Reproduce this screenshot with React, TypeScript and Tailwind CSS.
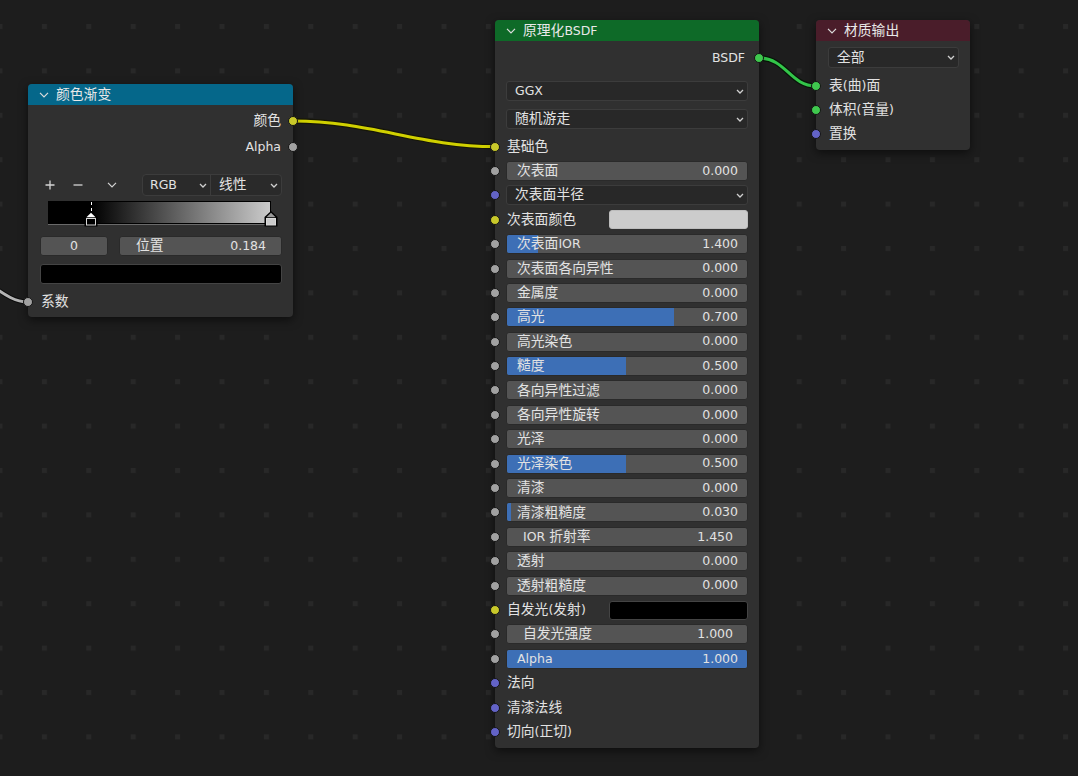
import React from 'react';

const CJK = /([\u2E80-\u9FFF\uFF00-\uFFEF]+)/;
function T({ s }: { s: string }) {
  const parts = s.split(CJK);
  return (
    <>
      {parts.map((p, i) =>
        i % 2 === 1 ? (
          <span key={i} className="text-[13.8px]">
            {p}
          </span>
        ) : p ? (
          <React.Fragment key={i}>{p}</React.Fragment>
        ) : null
      )}
    </>
  );
}

function HeadChev() {
  return (
    <svg width="10" height="6" viewBox="0 0 10 6" className="shrink-0">
      <polyline points="1,0.8 5,4.8 9,0.8" fill="none" stroke="#dcdcdc" strokeWidth="1.2" />
    </svg>
  );
}

function SmallChev() {
  return (
    <svg width="8" height="5" viewBox="0 0 8 5" className="shrink-0">
      <polyline points="1,1 4,4 7,1" fill="none" stroke="#d0d0d0" strokeWidth="1.3" />
    </svg>
  );
}

function Socket({ c, side }: { c: string; side: 'l' | 'r' }) {
  return (
    <span
      className={`absolute top-1/2 -translate-y-1/2 w-[10px] h-[10px] rounded-full border border-[#141414] ${c} ${
        side === 'l' ? 'left-[-5px]' : 'right-[-5px]'
      }`}
    />
  );
}

function Node({
  className,
  header,
  title,
  children,
}: {
  className: string;
  header: string;
  title: string;
  children: React.ReactNode;
}) {
  return (
    <div className={`absolute rounded-[4px] bg-[#303030] shadow-[0_3px_10px_rgba(0,0,0,0.55)] ${className}`}>
      <div className={`h-[21px] rounded-t-[4px] flex items-center pl-[11px] gap-[7px] text-[#e8e8e8] ${header}`}>
        <HeadChev />
        <span className="leading-none">
          <T s={title} />
        </span>
      </div>
      {children}
    </div>
  );
}

const Y = 'bg-[#c8c82a]';
const G = 'bg-[#a1a1a1]';
const P = 'bg-[#6363c7]';
const S = 'bg-[#3fc84e]';

type Row =
  | { k: 'label'; t: string; s: string }
  | { k: 'num'; t: string; v: string; f?: number; s: string }
  | { k: 'arrow'; t: string; v: string; s: string }
  | { k: 'drop'; t: string; s: string }
  | { k: 'color'; t: string; c: string; s: string };

const rows: Row[] = [
  { k: 'label', t: '基础色', s: Y },
  { k: 'num', t: '次表面', v: '0.000', s: G },
  { k: 'drop', t: '次表面半径', s: P },
  { k: 'color', t: '次表面颜色', c: 'bg-[#cccccc] border-[#bdbdbd]', s: Y },
  { k: 'num', t: '次表面IOR', v: '1.400', f: 31, s: G },
  { k: 'num', t: '次表面各向异性', v: '0.000', s: G },
  { k: 'num', t: '金属度', v: '0.000', s: G },
  { k: 'num', t: '高光', v: '0.700', f: 167, s: G },
  { k: 'num', t: '高光染色', v: '0.000', s: G },
  { k: 'num', t: '糙度', v: '0.500', f: 119, s: G },
  { k: 'num', t: '各向异性过滤', v: '0.000', s: G },
  { k: 'num', t: '各向异性旋转', v: '0.000', s: G },
  { k: 'num', t: '光泽', v: '0.000', s: G },
  { k: 'num', t: '光泽染色', v: '0.500', f: 119, s: G },
  { k: 'num', t: '清漆', v: '0.000', s: G },
  { k: 'num', t: '清漆粗糙度', v: '0.030', f: 4, s: G },
  { k: 'arrow', t: 'IOR 折射率', v: '1.450', s: G },
  { k: 'num', t: '透射', v: '0.000', s: G },
  { k: 'num', t: '透射粗糙度', v: '0.000', s: G },
  { k: 'color', t: '自发光(发射)', c: 'bg-black border-[#444444]', s: Y },
  { k: 'arrow', t: '自发光强度', v: '1.000', s: G },
  { k: 'num', t: 'Alpha', v: '1.000', f: 242, s: G },
  { k: 'label', t: '法向', s: P },
  { k: 'label', t: '清漆法线', s: P },
  { k: 'label', t: '切向(正切)', s: P },
];

function BsdfRow({ r }: { r: Row }) {
  let inner: React.ReactNode = null;
  if (r.k === 'label') {
    inner = (
      <span className="pl-[12px]">
        <T s={r.t} />
      </span>
    );
  } else if (r.k === 'num' || r.k === 'arrow') {
    inner = (
      <div
        className={`relative mx-[11px] flex-1 h-[20px] rounded-[3px] bg-[#545454] border border-[#2a2a2a] overflow-hidden flex items-center justify-between ${
          r.k === 'num' ? 'pl-[10px] pr-[9px]' : 'pl-[16px] pr-[14px]'
        }`}
      >
        {r.k === 'num' && r.f ? (
          <div className="absolute left-0 top-0 bottom-0 bg-[#3d6fb6]" style={{ width: r.f }} />
        ) : null}
        <span className="relative">
          <T s={r.t} />
        </span>
        <span className="relative">{r.v}</span>
      </div>
    );
  } else if (r.k === 'drop') {
    inner = (
      <div className="mx-[11px] flex-1 h-[20px] rounded-[3px] bg-[#282828] border border-[#3c3c3c] flex items-center justify-between pl-[8px] pr-[3px]">
        <span>
          <T s={r.t} />
        </span>
        <SmallChev />
      </div>
    );
  } else {
    inner = (
      <>
        <span className="pl-[12px]">
          <T s={r.t} />
        </span>
        <div className={`ml-auto mr-[11px] w-[139px] h-[19px] rounded-[3px] border ${r.c}`} />
      </>
    );
  }
  return (
    <div className="relative h-[24.4px] flex items-center">
      <Socket c={r.s} side="l" />
      {inner}
    </div>
  );
}

function Handle({ active, fill }: { active: boolean; fill: string }) {
  return (
    <svg width="14" height="16" viewBox="0 0 14 16">
      <polygon points="7,0 13.5,6 13.5,15.5 0.5,15.5 0.5,6" fill="#000" />
      <polygon points="7,1.8 11.6,6.2 2.4,6.2" fill={active ? '#ffffff' : '#9a9a9a'} />
      <rect x="2.5" y="7.5" width="9" height="6.5" fill={fill} stroke="#d8d8d8" strokeWidth="1" />
    </svg>
  );
}

export default function App() {
  return (
    <div className="relative w-[1078px] h-[776px] overflow-hidden bg-[#1d1d1d] font-['DejaVu_Sans','Noto_Sans_CJK_SC',sans-serif] text-[12.5px] leading-none text-[#e2e2e2]">
      {/* background grid */}
      <svg className="absolute inset-0" width="1078" height="776">
        <defs>
          <pattern id="grid" x="-2.5" y="24" width="44.4" height="44.4" patternUnits="userSpaceOnUse">
            <rect width="5" height="5" fill="#282828" />
          </pattern>
        </defs>
        <rect width="1078" height="776" fill="url(#grid)" />
      </svg>

      {/* wires */}
      <svg className="absolute inset-0" width="1078" height="776">
        <path d="M -30 272 C -5 285, 8 302, 28 302" fill="none" stroke="rgba(0,0,0,0.6)" strokeWidth="5" />
        <path d="M -30 272 C -5 285, 8 302, 28 302" fill="none" stroke="#b4b4b4" strokeWidth="3" />
        <path d="M 293 121 C 370 121, 420 146.6, 495 146.6" fill="none" stroke="rgba(20,20,0,0.75)" strokeWidth="5.5" />
        <path d="M 293 121 C 370 121, 420 146.6, 495 146.6" fill="none" stroke="#d0d000" strokeWidth="3" />
        <path d="M 759 58 C 786 58, 790 86, 816 86" fill="none" stroke="rgba(0,20,0,0.75)" strokeWidth="5.5" />
        <path d="M 759 58 C 786 58, 790 86, 816 86" fill="none" stroke="#33c64a" strokeWidth="3" />
      </svg>

      {/* 颜色渐变 */}
      <Node className="left-[28px] top-[84px] w-[265px] h-[233px]" header="bg-[#05678a]" title="颜色渐变">
        <div className="pt-[4px] flex flex-col">
          <div className="relative h-[24px] flex items-center justify-end pr-[12px]">
            <span>
              <T s="颜色" />
            </span>
            <Socket c={Y} side="r" />
          </div>
          <div className="relative mt-[2px] h-[24px] flex items-center justify-end pr-[12px]">
            <span>Alpha</span>
            <Socket c={G} side="r" />
          </div>
          <div className="mt-[15px] h-[22px] flex items-center pl-[17px] pr-[11px]">
            <svg width="10" height="10" viewBox="0 0 10 10" className="shrink-0">
              <path d="M5 0.5 V9.5 M0.5 5 H9.5" stroke="#d4d4d4" strokeWidth="1.3" />
            </svg>
            <svg width="10" height="10" viewBox="0 0 10 10" className="shrink-0 ml-[18px]">
              <path d="M0.5 5 H9.5" stroke="#d4d4d4" strokeWidth="1.3" />
            </svg>
            <svg width="10" height="6" viewBox="0 0 10 6" className="shrink-0 ml-[24px]">
              <polyline points="1,0.8 5,4.8 9,0.8" fill="none" stroke="#d4d4d4" strokeWidth="1.2" />
            </svg>
            <div className="ml-auto w-[140px] h-[22px] rounded-[4px] bg-[#2a2a2a] border border-[#3c3c3c] flex">
              <div className="w-[68px] flex items-center justify-between pl-[7px] pr-[3px] border-r border-[#3c3c3c]">
                <span>RGB</span>
                <SmallChev />
              </div>
              <div className="flex-1 flex items-center justify-between pl-[8px] pr-[3px]">
                <span>
                  <T s="线性" />
                </span>
                <SmallChev />
              </div>
            </div>
          </div>
          <div className="relative mt-[5px] ml-[20px] w-[223px] h-[24px]">
            <div className="h-[23px] border border-black bg-[linear-gradient(to_right,#000_19.3%,#cbcbcb)]" />
            <div className="h-px bg-[#6a6a6a]" />
            <div className="absolute left-[43px] top-[1px] h-[9px] border-l border-dashed border-white" />
            <div className="absolute left-[36px] top-[10px]">
              <Handle active fill="#000" />
            </div>
            <div className="absolute left-[216px] top-[10px]">
              <Handle active={false} fill="#cbcbcb" />
            </div>
          </div>
          <div className="mt-[11px] h-[20px] flex pl-[12px] gap-[11px]">
            <div className="w-[68px] rounded-[3px] bg-[#545454] border border-[#2a2a2a] flex items-center justify-center">0</div>
            <div className="w-[163px] rounded-[3px] bg-[#545454] border border-[#2a2a2a] flex items-center justify-between pl-[16px] pr-[15px]">
              <span>
                <T s="位置" />
              </span>
              <span>0.184</span>
            </div>
          </div>
          <div className="mt-[8px] ml-[12px] w-[242px] h-[20px] rounded-[3px] bg-black border border-[#444444]" />
          <div className="relative mt-[6px] h-[24px] flex items-center pl-[13px]">
            <Socket c={G} side="l" />
            <span>
              <T s="系数" />
            </span>
          </div>
        </div>
      </Node>

      {/* 原理化BSDF */}
      <Node className="left-[495px] top-[20px] w-[264px] h-[728px]" header="bg-[#0e6a28]" title="原理化BSDF">
        <div className="pt-[5px] flex flex-col">
          <div className="relative h-[24px] flex items-center justify-end pr-[14px]">
            <span>BSDF</span>
            <Socket c={S} side="r" />
          </div>
          <div className="mt-[11px] mx-[11px] h-[20px] rounded-[3px] bg-[#282828] border border-[#3c3c3c] flex items-center justify-between pl-[8px] pr-[3px]">
            <span>GGX</span>
            <SmallChev />
          </div>
          <div className="mt-[8px] mx-[11px] h-[20px] rounded-[3px] bg-[#282828] border border-[#3c3c3c] flex items-center justify-between pl-[8px] pr-[3px]">
            <span>
              <T s="随机游走" />
            </span>
            <SmallChev />
          </div>
          <div className="mt-[5.4px] flex flex-col">
            {rows.map((r, i) => (
              <BsdfRow key={i} r={r} />
            ))}
          </div>
        </div>
      </Node>

      {/* 材质输出 */}
      <Node className="left-[816px] top-[20px] w-[154px] h-[130px]" header="bg-[#4a1d2a]" title="材质输出">
        <div className="pt-[6px] flex flex-col">
          <div className="ml-[12px] mr-[11px] h-[21px] rounded-[3px] bg-[#282828] border border-[#3c3c3c] flex items-center justify-between pl-[8px] pr-[3px]">
            <span>
              <T s="全部" />
            </span>
            <SmallChev />
          </div>
          <div className="mt-[6px] flex flex-col">
            {[
              { t: '表(曲)面', c: S },
              { t: '体积(音量)', c: S },
              { t: '置换', c: P },
            ].map((r, i) => (
              <div key={i} className="relative h-[24px] flex items-center pl-[13px]">
                <Socket c={r.c} side="l" />
                <span>
                  <T s={r.t} />
                </span>
              </div>
            ))}
          </div>
        </div>
      </Node>
    </div>
  );
}
